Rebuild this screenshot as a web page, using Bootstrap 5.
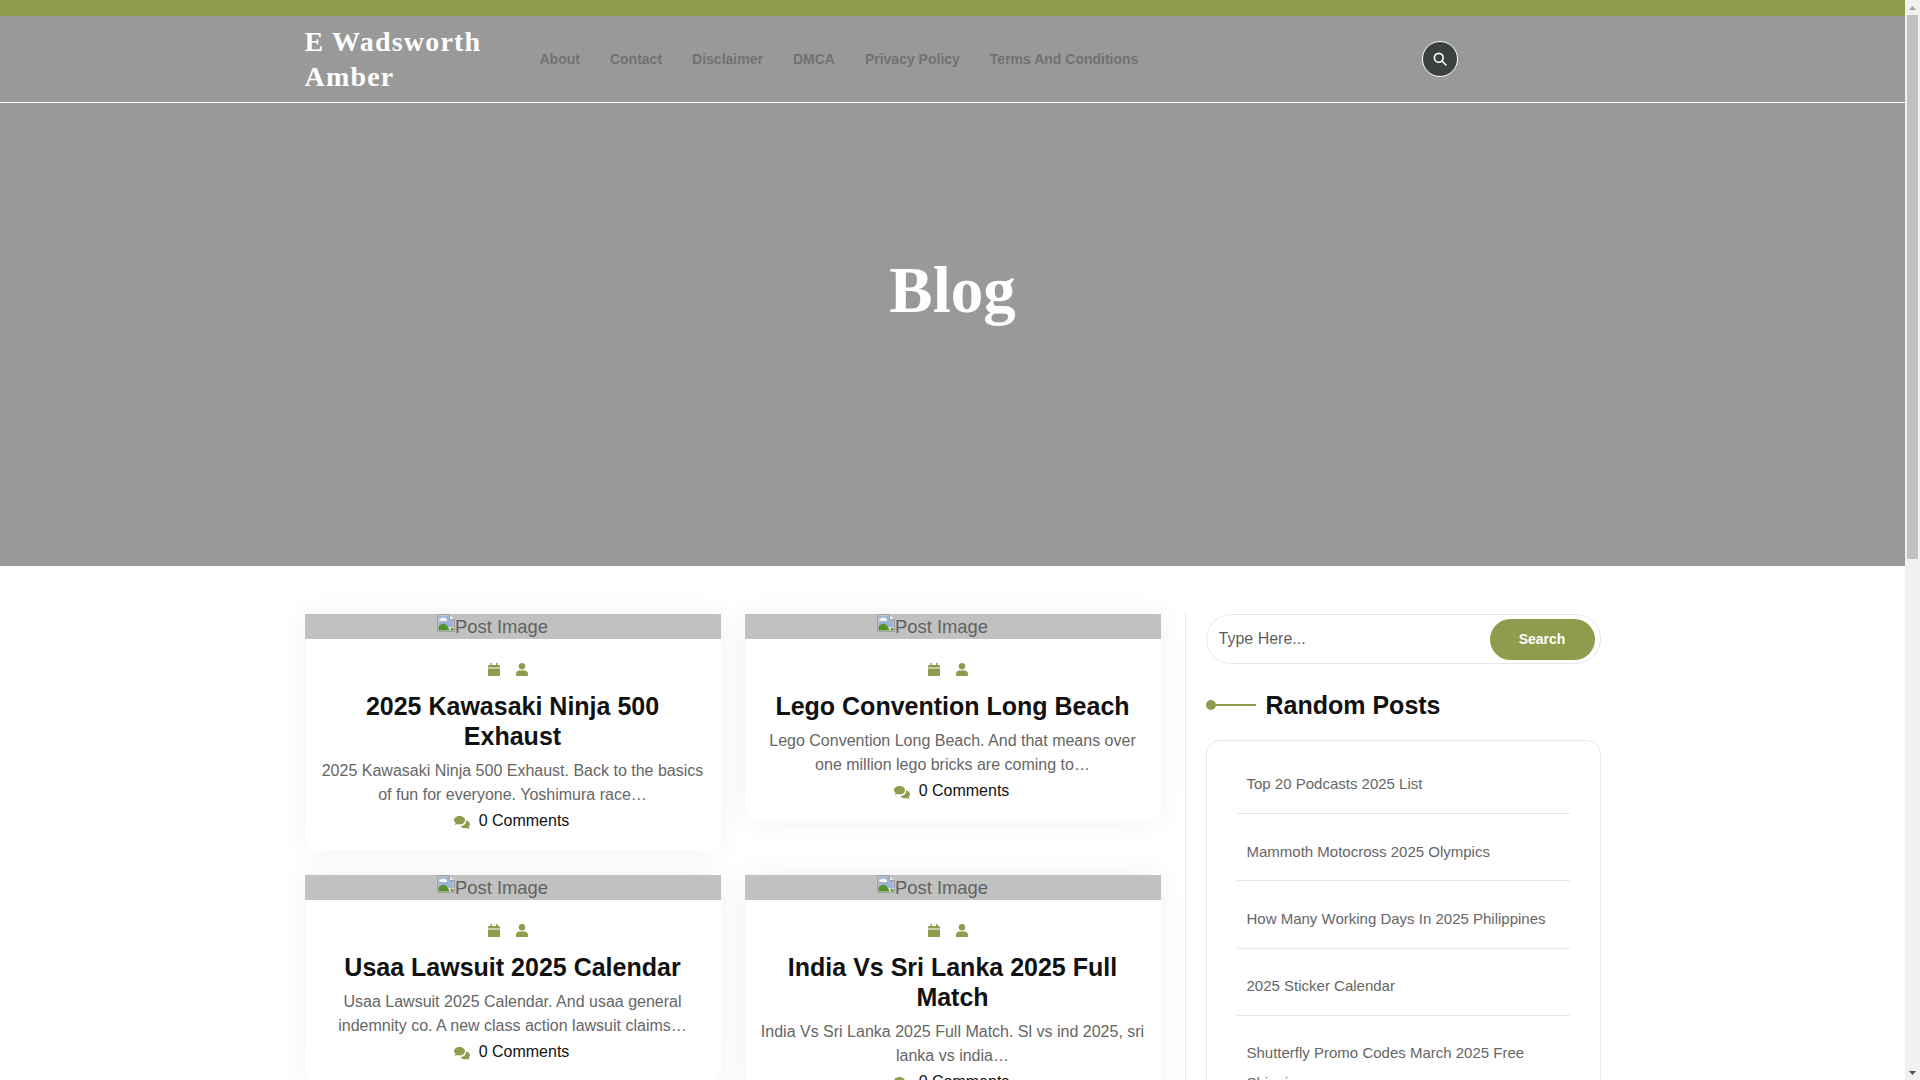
<!DOCTYPE html>
<html lang="en">
<head>
  <meta charset="UTF-8">
  <meta name="viewport" content="width=device-width, initial-scale=1.0">
  <title>Blog - E Wadsworth Amber</title>
  <link href="https://cdn.jsdelivr.net/npm/bootstrap@5.3.0/dist/css/bootstrap.min.css" rel="stylesheet">
  <style>
    body { font-family: "Liberation Sans", Arial, sans-serif; font-size: 16px; color: #666; }
    .page-view { min-width: 0; }
    .rail { width: 15px; flex: none; background: #f1f1f1; }
    .rail-end { height: 15px; }
    .rail-thumb { width: 11px; height: 544px; margin-left: 2px; background: #c1c1c1; }
    .top-strip { height: 16px; background: #8f9c4d; }
    .hero-area { background: #999; }
    .site-head { height: 87px; border-bottom: 1px solid #fff; }
    .site-title { font-family: "Liberation Serif", serif; font-weight: 700; font-size: 28px; line-height: 35px; letter-spacing: 1.2px; color: #fff; }
    .head-links .nav-link { padding: 0 15px; font-size: 14px; font-weight: 700; line-height: 20px; color: #727272; }
    .search-round { width: 36px; height: 36px; margin-left: 17.5px; border: 1px solid #fff; border-radius: 50%; background: #3b4141; }
    .hero-title { margin: 0; padding: 148px 0 237px; font-family: "Liberation Serif", serif; font-weight: 700; font-size: 65px; line-height: 78px; color: #fff; text-align: center; }
    .page-body { padding-top: 48px; }
    .post-box { margin-bottom: 24px; border: 0; border-radius: 0 0 14px 14px; box-shadow: 0 0 30px rgba(0, 0, 0, .06); }
    .post-thumb { height: 25px; padding-right: 40px; background: #c1c1c1; color: #616161; font-size: 18.4px; line-height: 26px; overflow: hidden; }
    .post-thumb svg { width: 18px; height: 18px; flex: none; }
    .post-inner { padding: 24px 15px 18px; text-align: center; }
    .post-meta { height: 13px; margin-bottom: 15px; padding-right: 10px; line-height: 13px; color: #8f9c4d; }
    .post-meta svg { display: block; width: 12px; height: 13px; }
    .post-title { margin: 0 0 8px; font-size: 25px; font-weight: 700; line-height: 30px; color: #111; }
    .post-text { margin: 0 0 2px; line-height: 24px; color: #666; }
    .post-comments { gap: 9px; padding-right: 2px; line-height: 24px; color: #111; }
    .post-comments svg { width: 16px; height: 13px; color: #8f9c4d; margin-top: 2px; }
    .side-col { border-left: 1px solid #e6e6f0; padding-left: 20px; }
    .side-wrap { padding-bottom: 24px; }
    .search-pill { height: 50px; padding: 4px 5px 4px 4px; border: 1px solid #e6e6f0; border-radius: 25px; }
    .search-pill .form-control { padding: 0 0 0 8px; border: 0; box-shadow: none; background: transparent; font-size: 16px; }
    .search-go { width: 105px; height: 41px; flex: none; border: 0; border-radius: 21px; background: #8f9c4d; color: #fff; font-size: 14px; font-weight: 700; }
    .side-head { margin: 26px 0 20px; font-size: 25px; font-weight: 700; line-height: 30px; color: #111; }
    .head-dot { width: 10px; height: 10px; border-radius: 50%; background: #8f9c4d; }
    .head-line { width: 40px; height: 2px; margin-right: 10px; background: #8f9c4d; }
    .side-box { padding: 5.7px 30px 0; border: 1px solid #e6e6f0; border-radius: 14px; }
    .side-box .list-group-item { padding: 22.6px 10px 13.7px; border-color: #e6e6f0; font-size: 15px; line-height: 30px; color: #666; background: transparent; }
  </style>
</head>
<body class="d-flex vh-100 overflow-hidden">
  <svg width="0" height="0" class="d-block position-absolute">
    <symbol id="ico-broken" viewBox="0 0 18 18">
      <path d="M.5.5h12l5 5v12H.5z" fill="#d6d6d6" stroke="#a0a0a0"/>
      <path d="M12.500.5v5h5" fill="#ececec" stroke="#a0a0a0"/>
      <path d="M1.500 1.500h10.500v4.500h4.500v7H1.500z" fill="#9db4d6"/>
      <path d="M4.500 3.500h3.500v1h2v2.500H2.500V4.500h2z" fill="#f4f4f4"/>
      <path d="M1.500 16.500v-4c3.500-4 8-4.500 11 4z" fill="#55912c"/>
      <path d="M13.500 16.500l1.200-3 1.800 1.200v1.800z" fill="#55912c"/>
    </symbol>
    <symbol id="ico-cal" viewBox="0 0 12 13">
      <path d="M2.500 0h1.500v2h4V0h1.500v2H11a1 1 0 0 1 1 1v1.500H0V3a1 1 0 0 1 1-1h1.500zM0 5.500h12V12a1 1 0 0 1-1 1H1a1 1 0 0 1-1-1z" fill="currentColor"/>
    </symbol>
    <symbol id="ico-user" viewBox="0 0 12 13">
      <circle cx="6" cy="3.200" r="3.200" fill="currentColor"/>
      <path d="M0 13v-2.200C0 8.800 1.600 7.500 3.500 7.500h5c1.900 0 3.500 1.300 3.500 3.300V13z" fill="currentColor"/>
    </symbol>
    <symbol id="ico-talk" viewBox="0 0 16 13">
      <path d="M5.500 0C8.500 0 11 1.800 11 4.200S8.500 8.400 5.500 8.400c-.8 0-1.500-.1-2.200-.4L.8 9l.9-2.200C.6 6.100 0 5.200 0 4.200 0 1.800 2.500 0 5.500 0z" fill="currentColor"/>
      <path d="M12 4.500c2.300.4 4 1.900 4 3.800 0 1-.5 1.900-1.300 2.500l.8 2.200-2.700-1c-.6.200-1.200.3-1.800.3-2 0-3.700-.9-4.500-2.300 3.300 0 5.800-2.100 5.500-5.500z" fill="currentColor"/>
    </symbol>
  </svg>

  <div class="page-view flex-grow-1">
    <div class="top-strip"></div>

    <!-- Header and page title -->
    <div class="hero-area">
      <header class="site-head">
        <div class="container h-100">
          <div class="row h-100 align-items-center">
            <div class="col-2"><a class="site-title d-block text-decoration-none" href="#">E Wadsworth Amber</a></div>
            <div class="col-8">
              <ul class="nav head-links">
                <li class="nav-item"><a class="nav-link" href="#">About</a></li>
                <li class="nav-item"><a class="nav-link" href="#">Contact</a></li>
                <li class="nav-item"><a class="nav-link" href="#">Disclaimer</a></li>
                <li class="nav-item"><a class="nav-link" href="#">DMCA</a></li>
                <li class="nav-item"><a class="nav-link" href="#">Privacy Policy</a></li>
                <li class="nav-item"><a class="nav-link" href="#">Terms And Conditions</a></li>
              </ul>
            </div>
            <div class="col-2">
              <div class="search-round d-flex align-items-center justify-content-center">
                <svg width="14" height="14" viewBox="0 0 14 14" fill="none" stroke="#fff" stroke-width="1.600"><circle cx="5.800" cy="5.800" r="4.400"/><path d="M9 9l4 4" stroke-linecap="round"/></svg>
              </div>
            </div>
          </div>
        </div>
      </header>
      <h1 class="hero-title">Blog</h1>
    </div>

    <div class="container page-body">
      <div class="row">
        <!-- Posts -->
        <div class="col-8">
          <div class="row align-items-start">
            <div class="col-6">
              <div class="card post-box">
                <div class="post-thumb d-flex justify-content-center">
                  <svg><use href="#ico-broken"/></svg><span>Post Image</span>
                </div>
                <div class="post-inner">
                  <div class="post-meta d-flex justify-content-center gap-3">
                    <svg><use href="#ico-cal"/></svg><svg><use href="#ico-user"/></svg>
                  </div>
                  <h3 class="post-title">2025 Kawasaki Ninja 500 Exhaust</h3>
                  <p class="post-text">2025 Kawasaki Ninja 500 Exhaust. Back to the basics of fun for everyone. Yoshimura race…</p>
                  <div class="post-comments d-flex justify-content-center align-items-center">
                    <svg><use href="#ico-talk"/></svg><span>0 Comments</span>
                  </div>
                </div>
              </div>
            </div>
            <div class="col-6">
              <div class="card post-box">
                <div class="post-thumb d-flex justify-content-center">
                  <svg><use href="#ico-broken"/></svg><span>Post Image</span>
                </div>
                <div class="post-inner">
                  <div class="post-meta d-flex justify-content-center gap-3">
                    <svg><use href="#ico-cal"/></svg><svg><use href="#ico-user"/></svg>
                  </div>
                  <h3 class="post-title">Lego Convention Long Beach</h3>
                  <p class="post-text">Lego Convention Long Beach. And that means over one million lego bricks are coming to…</p>
                  <div class="post-comments d-flex justify-content-center align-items-center">
                    <svg><use href="#ico-talk"/></svg><span>0 Comments</span>
                  </div>
                </div>
              </div>
            </div>
          </div>
          <div class="row align-items-start">
            <div class="col-6">
              <div class="card post-box">
                <div class="post-thumb d-flex justify-content-center">
                  <svg><use href="#ico-broken"/></svg><span>Post Image</span>
                </div>
                <div class="post-inner">
                  <div class="post-meta d-flex justify-content-center gap-3">
                    <svg><use href="#ico-cal"/></svg><svg><use href="#ico-user"/></svg>
                  </div>
                  <h3 class="post-title">Usaa Lawsuit 2025 Calendar</h3>
                  <p class="post-text">Usaa Lawsuit 2025 Calendar. And usaa general indemnity co. A new class action lawsuit claims…</p>
                  <div class="post-comments d-flex justify-content-center align-items-center">
                    <svg><use href="#ico-talk"/></svg><span>0 Comments</span>
                  </div>
                </div>
              </div>
            </div>
            <div class="col-6">
              <div class="card post-box">
                <div class="post-thumb d-flex justify-content-center">
                  <svg><use href="#ico-broken"/></svg><span>Post Image</span>
                </div>
                <div class="post-inner">
                  <div class="post-meta d-flex justify-content-center gap-3">
                    <svg><use href="#ico-cal"/></svg><svg><use href="#ico-user"/></svg>
                  </div>
                  <h3 class="post-title">India Vs Sri Lanka 2025 Full Match</h3>
                  <p class="post-text">India Vs Sri Lanka 2025 Full Match. Sl vs ind 2025, sri lanka vs india…</p>
                  <div class="post-comments d-flex justify-content-center align-items-center">
                    <svg><use href="#ico-talk"/></svg><span>0 Comments</span>
                  </div>
                </div>
              </div>
            </div>
          </div>
        </div>

        <!-- Sidebar -->
        <div class="col-4 side-wrap">
          <div class="side-col">
            <form class="search-pill d-flex align-items-center">
              <input type="text" class="form-control" placeholder="Type Here...">
              <button type="button" class="search-go">Search</button>
            </form>
            <h3 class="side-head d-flex align-items-center">
              <span class="head-dot"></span><span class="head-line"></span>Random Posts
            </h3>
            <ul class="list-group list-group-flush side-box">
              <li class="list-group-item">Top 20 Podcasts 2025 List</li>
              <li class="list-group-item">Mammoth Motocross 2025 Olympics</li>
              <li class="list-group-item">How Many Working Days In 2025 Philippines</li>
              <li class="list-group-item">2025 Sticker Calendar</li>
              <li class="list-group-item">Shutterfly Promo Codes March 2025 Free Shipping</li>
            </ul>
          </div>
        </div>
      </div>
    </div>
  </div>

  <!-- Window scrollbar, as in the screenshot -->
  <div class="rail d-flex flex-column">
    <div class="rail-end d-flex justify-content-center align-items-center">
      <svg width="7" height="4" viewBox="0 0 7 4"><path d="M3.500 0L7 4H0z" fill="#a3a3a3"/></svg>
    </div>
    <div class="rail-thumb"></div>
    <div class="flex-grow-1"></div>
    <div class="rail-end d-flex justify-content-center align-items-center">
      <svg width="7" height="4" viewBox="0 0 7 4"><path d="M0 0h7L3.500 4z" fill="#505050"/></svg>
    </div>
  </div>
</body>
</html>
